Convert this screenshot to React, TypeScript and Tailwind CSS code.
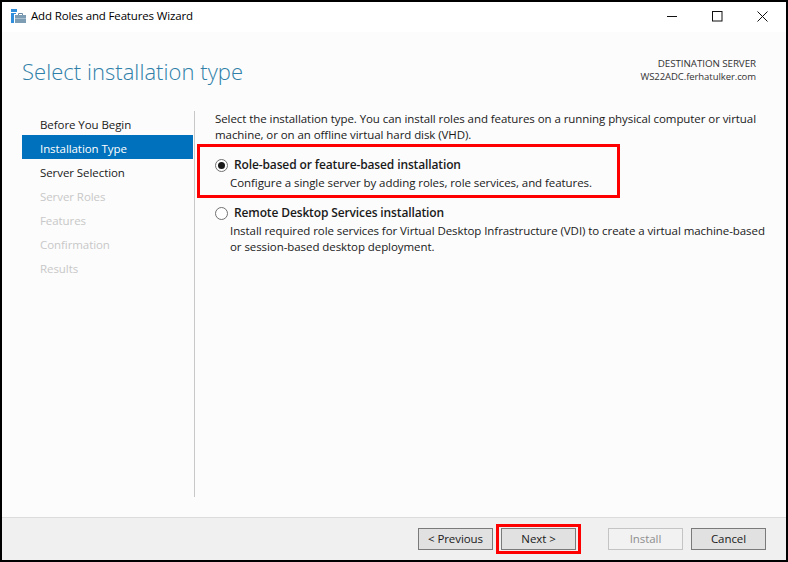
const font = { fontFamily: '"Open Sans", "Noto Sans", sans-serif' };

const steps = [
  { label: 'Before You Begin', state: 'done' },
  { label: 'Installation Type', state: 'active' },
  { label: 'Server Selection', state: 'done' },
  { label: 'Server Roles', state: 'off' },
  { label: 'Features', state: 'off' },
  { label: 'Confirmation', state: 'off' },
  { label: 'Results', state: 'off' },
];

function WizardIcon() {
  return (
    <svg width="15" height="14" viewBox="0 0 15 14" className="shrink-0">
      <rect x="0" y="0" width="6" height="3" fill="#2f8fdd" />
      <rect x="0" y="4" width="3" height="10" fill="#2f8fdd" />
      <rect x="3" y="4" width="2" height="1" fill="#2f8fdd" />
      <path d="M7.5 6V4.5h4V6" fill="none" stroke="#6d8ca3" strokeWidth="1" />
      <rect x="4" y="6" width="11" height="8" fill="#7d9db5" />
      <rect x="4" y="9" width="11" height="1" fill="#a9c0d1" />
    </svg>
  );
}

function Radio({ checked }: { checked?: boolean }) {
  return (
    <span className="flex h-[13px] w-[13px] shrink-0 items-center justify-center rounded-full border border-[#707070] bg-white">
      {checked && <span className="h-[7px] w-[7px] rounded-full bg-[#1a1a1a]" />}
    </span>
  );
}

function WinButton({ children, disabled }: { children: string; disabled?: boolean }) {
  return (
    <div
      className={
        disabled
          ? 'flex h-[22px] w-[75px] items-center justify-center border border-[#c4c4c4] bg-[#f2f2f2] text-[11.5px] text-[#8e8e8e]'
          : 'flex h-[22px] w-[75px] items-center justify-center border border-[#7a7a7a] bg-[#e1e1e1] text-[11.5px] text-[#1a1a1a]'
      }
    >
      {children}
    </div>
  );
}

export default function App() {
  return (
    <div style={font} className="flex h-[562px] w-[788px] flex-col overflow-hidden border-2 border-black bg-white tracking-[-0.07px] text-[#1a1a1a]">
      {/* title bar */}
      <div className="flex h-[30px] shrink-0 items-center bg-white pb-[2px] pl-[9px]">
        <WizardIcon />
        <span className="ml-[5px] text-[11.5px] leading-none tracking-[-0.15px] text-black">Add Roles and Features Wizard</span>
        <div className="ml-auto flex items-center gap-[34px] pr-[18px]">
          <svg width="11" height="11" viewBox="0 0 11 11"><path d="M0 5.5h10" stroke="#111" strokeWidth="1" /></svg>
          <svg width="11" height="11" viewBox="0 0 11 11"><rect x="0.5" y="0.5" width="9.5" height="9.5" fill="none" stroke="#111" strokeWidth="1" /></svg>
          <svg width="11" height="11" viewBox="0 0 11 11"><path d="M0.5 0.5l10 10M10.5 0.5l-10 10" stroke="#111" strokeWidth="1" /></svg>
        </div>
      </div>

      {/* header */}
      <div className="flex h-[79px] shrink-0 justify-between bg-[#fcfcfc] pl-[20px] pr-[30px]">
        <h1 className="pt-[23px] text-[22px] leading-[32px] font-light tracking-[0.04px] text-[#2f7fa8]">Select installation type</h1>
        <div className="pt-[25px] text-right text-[9.5px] leading-[13px] text-[#333]">
          <div className="text-[9.8px]">DESTINATION SERVER</div>
          <div>WS22ADC.ferhatulker.com</div>
        </div>
      </div>

      {/* body */}
      <div className="flex min-h-0 flex-1 bg-[#fcfcfc] pl-[20px]">
        <div className="mb-[20px] w-[173px] shrink-0 border-r border-[#c8c8c8]">
          {steps.map((s) => (
            <div
              key={s.label}
              className={
                s.state === 'active'
                  ? 'mr-[1px] flex h-[24px] items-center bg-[#0071bc] pl-[18px] pt-[4px] text-[11.5px] text-white'
                  : s.state === 'off'
                    ? 'flex h-[24px] items-center pl-[18px] pt-[4px] text-[11.5px] text-[#c8c8c8]'
                    : 'flex h-[24px] items-center pl-[18px] pt-[4px] text-[11.5px] text-[#1a1a1a]'
              }
            >
              {s.label}
            </div>
          ))}
        </div>
        <div className="flex-1 pl-[20px] pr-[20px] text-[11.5px] leading-[16px]">
          <p>
            Select the installation type. You can install roles and features on a running physical computer or virtual machine, or on an offline virtual hard disk (VHD).
          </p>
          <div className="relative mt-[6px]">
            <div className="absolute top-[-5px] left-[-18px] h-[54px] w-[423px] border-[3px] border-[#ff0000]" />
            <div className="flex h-[24px] items-center gap-[6px] pt-[8px]">
              <Radio checked />
              <span className="text-[12px] font-semibold tracking-[-0.13px]">Role-based or feature-based installation</span>
            </div>
            <p className="pl-[15px] pt-[2px]">Configure a single server by adding roles, role services, and features.</p>
          </div>
          <div className="mt-[14px]">
            <div className="flex h-[16px] items-center gap-[6px]">
              <Radio />
              <span className="text-[12px] font-semibold tracking-[-0.13px]">Remote Desktop Services installation</span>
            </div>
            <p className="pl-[15px] pt-[2px]">
              Install required role services for Virtual Desktop Infrastructure (VDI) to create a virtual machine-based or session-based desktop deployment.
            </p>
          </div>
        </div>
      </div>

      {/* footer */}
      <div className="flex h-[43px] shrink-0 items-center border-t border-[#dcdcdc] bg-[#f0f0f0] pr-[20px]">
        <div className="ml-auto flex items-center">
          <WinButton>{'< Previous'}</WinButton>
          <div className="relative ml-[8px]">
            <div className="absolute top-[-4px] left-[-5px] h-[30px] w-[85px] border-[3px] border-[#ff0000]" />
            <WinButton>{'Next >'}</WinButton>
          </div>
          <div className="ml-[32px]"><WinButton disabled>Install</WinButton></div>
          <div className="ml-[8px]"><WinButton>Cancel</WinButton></div>
        </div>
      </div>
    </div>
  );
}
